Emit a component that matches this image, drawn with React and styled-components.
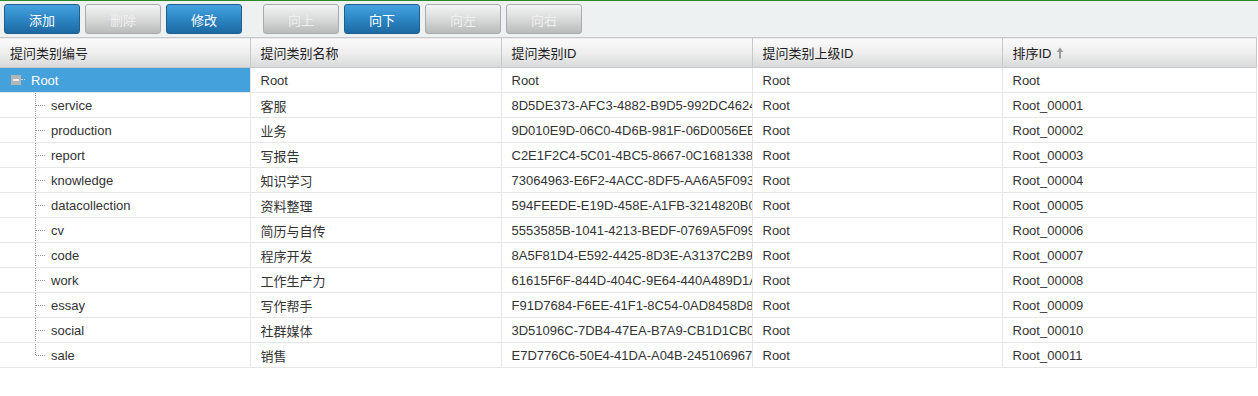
import styled, { createGlobalStyle, css } from "styled-components";

const GlobalStyle = createGlobalStyle`
	html, body {
		margin: 0;
		padding: 0;
		background: #ffffff;
	}
	body {
		font-family: "Liberation Sans", Arial, "Noto Sans CJK SC", sans-serif;
		font-size: 13px;
		color: #333;
	}
`;

const columns = [
	{ key: "code", title: "提问类别编号", width: 250 },
	{ key: "name", title: "提问类别名称", width: 251 },
	{ key: "id", title: "提问类别ID", width: 251 },
	{ key: "parent", title: "提问类别上级ID", width: 250 },
	{ key: "sort", title: "排序ID", width: 254, sorted: true },
];

const rows = [
	{ code: "service", name: "客服", id: "8D5DE373-AFC3-4882-B9D5-992DC4624A10" },
	{ code: "production", name: "业务", id: "9D010E9D-06C0-4D6B-981F-06D0056EE2B1" },
	{ code: "report", name: "写报告", id: "C2E1F2C4-5C01-4BC5-8667-0C16813389A2" },
	{ code: "knowledge", name: "知识学习", id: "73064963-E6F2-4ACC-8DF5-AA6A5F093C44" },
	{ code: "datacollection", name: "资料整理", id: "594FEEDE-E19D-458E-A1FB-3214820B0E55" },
	{ code: "cv", name: "简历与自传", id: "5553585B-1041-4213-BEDF-0769A5F09966" },
	{ code: "code", name: "程序开发", id: "8A5F81D4-E592-4425-8D3E-A3137C2B9A77" },
	{ code: "work", name: "工作生产力", id: "61615F6F-844D-404C-9E64-440A489D1A88" },
	{ code: "essay", name: "写作帮手", id: "F91D7684-F6EE-41F1-8C54-0AD8458D8B99" },
	{ code: "social", name: "社群媒体", id: "3D51096C-7DB4-47EA-B7A9-CB1D1CB0C010" },
	{ code: "sale", name: "销售", id: "E7D776C6-50E4-41DA-A04B-245106967D11" },
];

const Page = styled.div`
	width: 1258px;
	height: 396px;
	border-top: 1px solid #2b8a2b;
	box-sizing: border-box;
	background: #ffffff;
	overflow: hidden;
`;

const Toolbar = styled.div`
	display: flex;
	align-items: center;
	gap: 21px;
	height: 36px;
	padding-left: 4px;
	background: #eef1f2;
`;

const ButtonGroup = styled.div`
	display: flex;
	gap: 5px;
`;

const Button = styled.button`
	width: 76px;
	height: 30px;
	padding: 0;
	border-radius: 3px;
	font-family: "Liberation Sans", Arial, "Noto Sans CJK SC", sans-serif;
	font-size: 13px;
	cursor: pointer;
	${(p) =>
		p.$disabled
			? css`
					color: #efefef;
					border: 1px solid #a9abad;
					background: linear-gradient(#f3f4f4, #dcdddd 45%, #b9baba);
					cursor: default;
			  `
			: css`
					color: #ffffff;
					border: 1px solid #1f5f8e;
					background: linear-gradient(#45a3e0, #2d85c4 50%, #1c6aa3);
			  `}
`;

const Table = styled.table`
	border-collapse: collapse;
	table-layout: fixed;
	width: 1256px;
`;

const HeadCell = styled.th`
	height: 30px;
	padding: 0 0 0 10px;
	text-align: left;
	font-weight: normal;
	color: #1e1e1e;
	white-space: nowrap;
	border: 1px solid #c6c8c9;
	border-left: none;
	background: linear-gradient(#fbfbfb, #eeeeee 50%, #d8d9da);
	box-sizing: border-box;
`;

const SortArrow = styled.svg`
	margin-left: 4px;
	vertical-align: -1px;
`;

const Cell = styled.td`
	height: 25px;
	padding: 0 2px 0 10px;
	white-space: nowrap;
	overflow: hidden;
	color: #333;
	border-right: 1px solid #e6e6e6;
	border-bottom: 1px solid #e6e6e6;
	box-sizing: border-box;
	${(p) =>
		p.$selected &&
		css`
			background: #45a1dc;
			color: #ffffff;
		`}
`;

const TreeCell = styled(Cell)`
	padding: 0;
`;

const TreeLine = styled.div`
	display: flex;
	align-items: center;
	height: 24px;
`;

const RootToggle = styled.span`
	position: relative;
	display: inline-flex;
	align-items: center;
	justify-content: center;
	width: 10px;
	height: 10px;
	margin-left: 11px;
	background: #b5b5b5;

	&::before {
		content: "";
		width: 6px;
		height: 2px;
		background: #f0f0f0;
	}

	&::after {
		content: "";
		position: absolute;
		left: 10px;
		top: 4px;
		width: 4px;
		border-top: 1px dotted #c9d8e3;
	}
`;

const RootLabel = styled.span`
	margin-left: 10px;
`;

const Branch = styled.span`
	position: relative;
	align-self: stretch;
	width: 16px;
	margin-left: 35px;

	&::before {
		content: "";
		position: absolute;
		left: 0;
		top: -1px;
		height: ${(p) => (p.$last ? "13px" : "26px")};
		border-left: 1px dotted #9a9a9a;
	}

	&::after {
		content: "";
		position: absolute;
		left: 1px;
		top: 12px;
		width: 9px;
		border-top: 1px dotted #9a9a9a;
	}
`;

const Blank = styled.div`
	height: 28px;
`;

export default function App() {
	return (
		<>
			<GlobalStyle />
			<Page>
				<Toolbar>
					<ButtonGroup>
						<Button>添加</Button>
						<Button $disabled>删除</Button>
						<Button>修改</Button>
					</ButtonGroup>
					<ButtonGroup>
						<Button $disabled>向上</Button>
						<Button>向下</Button>
						<Button $disabled>向左</Button>
						<Button $disabled>向右</Button>
					</ButtonGroup>
				</Toolbar>
				<Table>
					<colgroup>
						{columns.map((c) => (
							<col key={c.key} style={{ width: c.width }} />
						))}
					</colgroup>
					<thead>
						<tr>
							{columns.map((c) => (
								<HeadCell key={c.key}>
									{c.title}
									{c.sorted && (
										<SortArrow width="8" height="12" viewBox="0 0 8 12">
											<path d="M4 0.5 L7.5 5 L5 5 L5 11.5 L3 11.5 L3 5 L0.5 5 Z" fill="#9a9a9a" />
										</SortArrow>
									)}
								</HeadCell>
							))}
						</tr>
					</thead>
					<tbody>
						<tr>
							<TreeCell $selected>
								<TreeLine>
									<RootToggle />
									<RootLabel>Root</RootLabel>
								</TreeLine>
							</TreeCell>
							<Cell>Root</Cell>
							<Cell>Root</Cell>
							<Cell>Root</Cell>
							<Cell>Root</Cell>
						</tr>
						{rows.map((r, i) => (
							<tr key={r.code}>
								<TreeCell>
									<TreeLine>
										<Branch $last={i === rows.length - 1} />
										<span>{r.code}</span>
									</TreeLine>
								</TreeCell>
								<Cell>{r.name}</Cell>
								<Cell>{r.id}</Cell>
								<Cell>Root</Cell>
								<Cell>{`Root_${String(i + 1).padStart(5, "0")}`}</Cell>
							</tr>
						))}
					</tbody>
				</Table>
				<Blank />
			</Page>
		</>
	);
}
